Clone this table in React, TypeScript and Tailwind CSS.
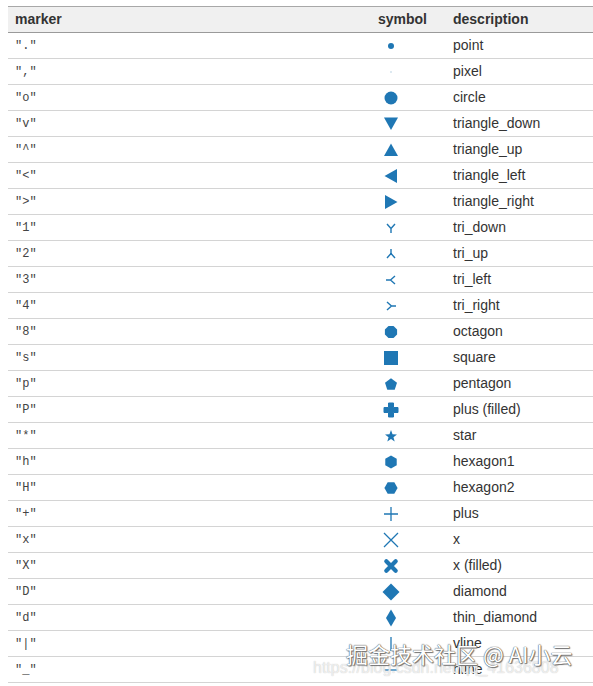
import React from "react";

const C = "#1f77b4";

const poly = (n: number, r: number, rot: number, cx = 12, cy = 12) =>
  Array.from({ length: n }, (_, i) => {
    const a = rot + (i * 2 * Math.PI) / n;
    return `${(cx + r * Math.cos(a)).toFixed(2)},${(cy + r * Math.sin(a)).toFixed(2)}`;
  }).join(" ");

const star = (() => {
  const pts: string[] = [];
  for (let i = 0; i < 10; i++) {
    const r = i % 2 === 0 ? 6.3 : 2.6;
    const a = -Math.PI / 2 + (i * Math.PI) / 5;
    pts.push(`${(12 + r * Math.cos(a)).toFixed(2)},${(12.4 + r * Math.sin(a)).toFixed(2)}`);
  }
  return pts.join(" ");
})();

const Sym = ({ k }: { k: string }) => {
  let el: React.ReactNode = null;
  switch (k) {
    case ".":
      el = <circle cx="12" cy="12" r="3" fill={C} />;
      break;
    case ",":
      el = <rect x="11.5" y="11.5" width="1" height="1" fill="#7aa6c8" />;
      break;
    case "o":
      el = <circle cx="12" cy="12" r="6.5" fill={C} />;
      break;
    case "v":
      el = <polygon points="5,5.5 19,5.5 12,18" fill={C} />;
      break;
    case "^":
      el = <polygon points="12,5.5 5,18 19,18" fill={C} />;
      break;
    case "<":
      el = <polygon points="5.5,12 18,5 18,19" fill={C} />;
      break;
    case ">":
      el = <polygon points="18.5,12 6,5 6,19" fill={C} />;
      break;
    case "1":
      el = (
        <g stroke={C} strokeWidth="1.4" fill="none">
          <path d="M12 12.5 L12 17 M12 12.5 L8 8 M12 12.5 L16 8" />
        </g>
      );
      break;
    case "2":
      el = (
        <g stroke={C} strokeWidth="1.4" fill="none">
          <path d="M12 11.5 L12 7 M12 11.5 L8 16 M12 11.5 L16 16" />
        </g>
      );
      break;
    case "3":
      el = (
        <g stroke={C} strokeWidth="1.4" fill="none">
          <path d="M11.5 12 L7 12 M11.5 12 L16 8 M11.5 12 L16 16" />
        </g>
      );
      break;
    case "4":
      el = (
        <g stroke={C} strokeWidth="1.4" fill="none">
          <path d="M12.5 12 L17 12 M12.5 12 L8 8 M12.5 12 L8 16" />
        </g>
      );
      break;
    case "8":
      el = <polygon points={poly(8, 6.6, Math.PI / 8)} fill={C} />;
      break;
    case "s":
      el = <rect x="5" y="5" width="14" height="14" fill={C} />;
      break;
    case "p":
      el = <polygon points={poly(5, 6.3, -Math.PI / 2, 12, 12.6)} fill={C} />;
      break;
    case "P":
      el = (
        <path
          d="M9.5 5 H14.5 V9.5 H19 V14.5 H14.5 V19 H9.5 V14.5 H5 V9.5 H9.5 Z"
          fill={C}
          stroke={C}
          strokeWidth="1"
          strokeLinejoin="round"
        />
      );
      break;
    case "*":
      el = <polygon points={star} fill={C} />;
      break;
    case "h":
      el = <polygon points={poly(6, 6.6, -Math.PI / 2)} fill={C} />;
      break;
    case "H":
      el = <polygon points={poly(6, 6.6, 0)} fill={C} />;
      break;
    case "+":
      el = (
        <g stroke={C} strokeWidth="1.3">
          <path d="M12 5 V19 M5 12 H19" />
        </g>
      );
      break;
    case "x":
      el = (
        <g stroke={C} strokeWidth="1.3">
          <path d="M5 5 L19 19 M19 5 L5 19" />
        </g>
      );
      break;
    case "X":
      el = (
        <g stroke={C} strokeWidth="4.2" strokeLinecap="round">
          <path d="M7.3 7.3 L16.7 16.7 M16.7 7.3 L7.3 16.7" />
        </g>
      );
      break;
    case "D":
      el = <polygon points="12,3.5 20.5,12 12,20.5 3.5,12" fill={C} />;
      break;
    case "d":
      el = <polygon points="12,3.5 17,12 12,20.5 7,12" fill={C} />;
      break;
    case "|":
      el = <path d="M12 5 V19" stroke={C} strokeWidth="1.3" />;
      break;
    case "_":
      el = <path d="M5 12 H19" stroke={C} strokeWidth="1.3" />;
      break;
  }
  return (
    <svg width="24" height="24" viewBox="0 0 24 24">
      {el}
    </svg>
  );
};

const rows: [string, string][] = [
  [".", "point"],
  [",", "pixel"],
  ["o", "circle"],
  ["v", "triangle_down"],
  ["^", "triangle_up"],
  ["<", "triangle_left"],
  [">", "triangle_right"],
  ["1", "tri_down"],
  ["2", "tri_up"],
  ["3", "tri_left"],
  ["4", "tri_right"],
  ["8", "octagon"],
  ["s", "square"],
  ["p", "pentagon"],
  ["P", "plus (filled)"],
  ["*", "star"],
  ["h", "hexagon1"],
  ["H", "hexagon2"],
  ["+", "plus"],
  ["x", "x"],
  ["X", "x (filled)"],
  ["D", "diamond"],
  ["d", "thin_diamond"],
  ["|", "vline"],
  ["_", "hline"],
];

export default function App() {
  return (
    <div className="relative w-[593px] h-[686px] bg-white overflow-hidden font-['Liberation_Sans',Arial,sans-serif]">
      <div className="pt-[6px] pl-[8px]">
        <div className="border-t border-[#a8a8a8]">
          <div className="flex h-[26px] items-center bg-[#f0f0f0] border-b border-[#9a9a9a] text-[14px] font-bold text-[#333]">
            <div className="w-[358px] pl-[7px]">marker</div>
            <div className="w-[80px] text-right pr-[19px]">symbol</div>
            <div className="flex-1 pl-[7px]">description</div>
          </div>
          {rows.map(([k, d]) => (
            <div key={d} className="flex h-[26px] items-center border-b border-[#d4d4d4] text-[#333]">
              <div className="w-[358px] pl-[7px] text-[12px] font-['Liberation_Mono',monospace] text-[#444]">
                "{k}"
              </div>
              <div className="w-[80px] pl-[13px] flex items-center">
                <Sym k={k} />
              </div>
              <div className="flex-1 pl-[7px] text-[14px]">{d}</div>
            </div>
          ))}
        </div>
      </div>
      <div className="absolute left-[313px] top-[659px] text-[16px] leading-[18px] text-white/70 [text-shadow:0_0_1px_#bbb] whitespace-nowrap">
        https://blog.csdn.net/qq_41636808
      </div>
      <div className="absolute left-[346px] top-[639px] text-[22px] leading-[28px] text-white whitespace-nowrap font-['Noto_Sans_CJK_SC',sans-serif] [text-shadow:0_0_1px_#555,0_0_1px_#555,1px_1px_1px_#777]">
        掘金技术社区 @ AI小云
      </div>
    </div>
  );
}
